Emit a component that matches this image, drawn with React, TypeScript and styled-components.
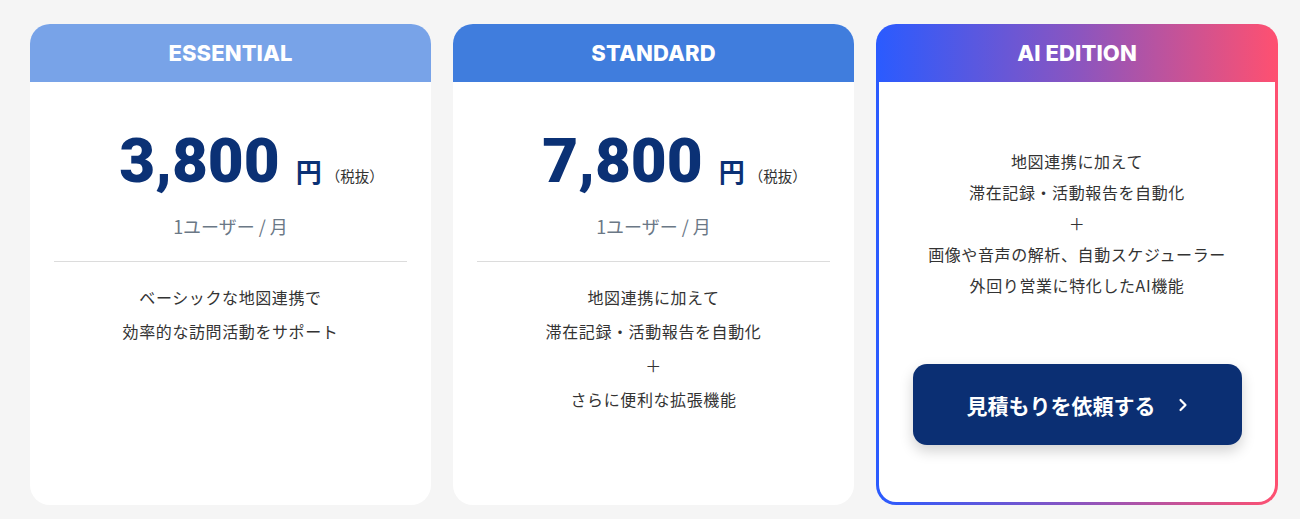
import styled, { createGlobalStyle } from "styled-components"

const GlobalStyle = createGlobalStyle`
    * { box-sizing: border-box; }
    body {
        margin: 0;
        background: #f5f5f5;
        font-family: "Noto Sans CJK JP", "Noto Sans", sans-serif;
    }
`

const plans = [
    {
        name: "ESSENTIAL",
        color: "#78a3e8",
        price: "3,800",
        lines: ["ベーシックな地図連携で", "効率的な訪問活動をサポート"],
    },
    {
        name: "STANDARD",
        color: "#407ddd",
        price: "7,800",
        lines: ["地図連携に加えて", "滞在記録・活動報告を自動化", "＋", "さらに便利な拡張機能"],
    },
]

const aiLines = [
    "地図連携に加えて",
    "滞在記録・活動報告を自動化",
    "＋",
    "画像や音声の解析、自動スケジューラー",
    "外回り営業に特化したAI機能",
]

export default function App() {
    return (
        <>
            <GlobalStyle />
            <Page>
                {plans.map(plan => (
                    <Card key={plan.name}>
                        <Header $bg={plan.color}>{plan.name}</Header>
                        <Body>
                            <PriceRow>
                                <Amount>{plan.price}</Amount>
                                <Yen>円</Yen>
                                <Tax>（税抜）</Tax>
                            </PriceRow>
                            <Unit>1ユーザー / 月</Unit>
                            <Divider />
                            <Description>
                                {plan.lines.map(line => <p key={line}>{line}</p>)}
                            </Description>
                        </Body>
                    </Card>
                ))}
                <AiCard>
                    <Header $bg="transparent">AI EDITION</Header>
                    <AiBody>
                        <AiDescription>
                            {aiLines.map(line => <p key={line}>{line}</p>)}
                        </AiDescription>
                        <QuoteButton>
                            見積もりを依頼する
                            <svg width="10" height="14" viewBox="0 0 10 14" fill="none">
                                <path d="M2.5 2 L7.5 7 L2.5 12" stroke="#fff" strokeWidth="2.2" strokeLinecap="round" strokeLinejoin="round" />
                            </svg>
                        </QuoteButton>
                    </AiBody>
                </AiCard>
            </Page>
        </>
    )
}

const Page = styled.div`
    display: grid;
    grid-template-columns: 401px 401px 402px;
    gap: 22px;
    padding: 24px 0 0 30px;
`

const Card = styled.div`
    height: 481px;
    border-radius: 20px;
    background: #fff;
    overflow: hidden;
    display: flex;
    flex-direction: column;
`

const AiCard = styled(Card)`
    background: linear-gradient(90deg, #2a5bff 0%, #8a55c0 50%, #ff5070 100%);
    padding: 0 3px 3px;
`

const Header = styled.div<{ $bg: string }>`
    height: 58px;
    flex-shrink: 0;
    background: ${p => p.$bg};
    color: #fff;
    display: flex;
    align-items: center;
    justify-content: center;
    font-family: "Inter", "Noto Sans", sans-serif;
    font-weight: 800;
    font-size: 22px;
    letter-spacing: 0.1px;
`

const Body = styled.div`
    flex: 1;
    display: flex;
    flex-direction: column;
    align-items: center;
    padding-top: 41px;
`

const PriceRow = styled.div`
    display: flex;
    align-items: baseline;
    justify-content: center;
    height: 76px;
    padding-left: 42px;
    color: #0b3175;
`

const Amount = styled.span`
    font-family: "Roboto", "Liberation Sans", sans-serif;
    font-weight: 900;
    font-size: 62px;
    line-height: 76px;
`

const Yen = styled.span`
    font-weight: 700;
    font-size: 26px;
    line-height: 30px;
    margin-left: 16px;
`

const Tax = styled.span`
    font-size: 14.5px;
    line-height: 20px;
    color: #333;
    margin-left: 4px;
`

const Unit = styled.div`
    margin-top: 15px;
    font-size: 18px;
    color: #6b7886;
    line-height: 24px;
`

const Divider = styled.hr`
    align-self: stretch;
    margin: 23px 24px 0;
    border: none;
    border-top: 1px solid #dcdcdc;
`

const Description = styled.div`
    padding-top: 18px;
    text-align: center;
    font-size: 16px;
    color: #333;
    line-height: 34px;
    letter-spacing: 0.6px;

    p {
        margin: 0;
    }
`

const AiBody = styled.div`
    flex: 1;
    background: #fff;
    border-radius: 0 0 17px 17px;
    display: flex;
    flex-direction: column;
    align-items: center;
    padding: 64px 30px 0;
`

const AiDescription = styled(Description)`
    padding-top: 0;
    line-height: 31px;
`

const QuoteButton = styled.button`
    margin-top: 63px;
    width: 329px;
    height: 81px;
    border: none;
    border-radius: 14px;
    background: #0b2f73;
    box-shadow: 0 6px 14px rgba(0, 0, 0, 0.18);
    color: #fff;
    font-family: "Noto Sans CJK JP", sans-serif;
    font-weight: 700;
    font-size: 21px;
    display: flex;
    align-items: center;
    justify-content: center;
    gap: 22px;
    padding-left: 6px;
    cursor: pointer;
`
